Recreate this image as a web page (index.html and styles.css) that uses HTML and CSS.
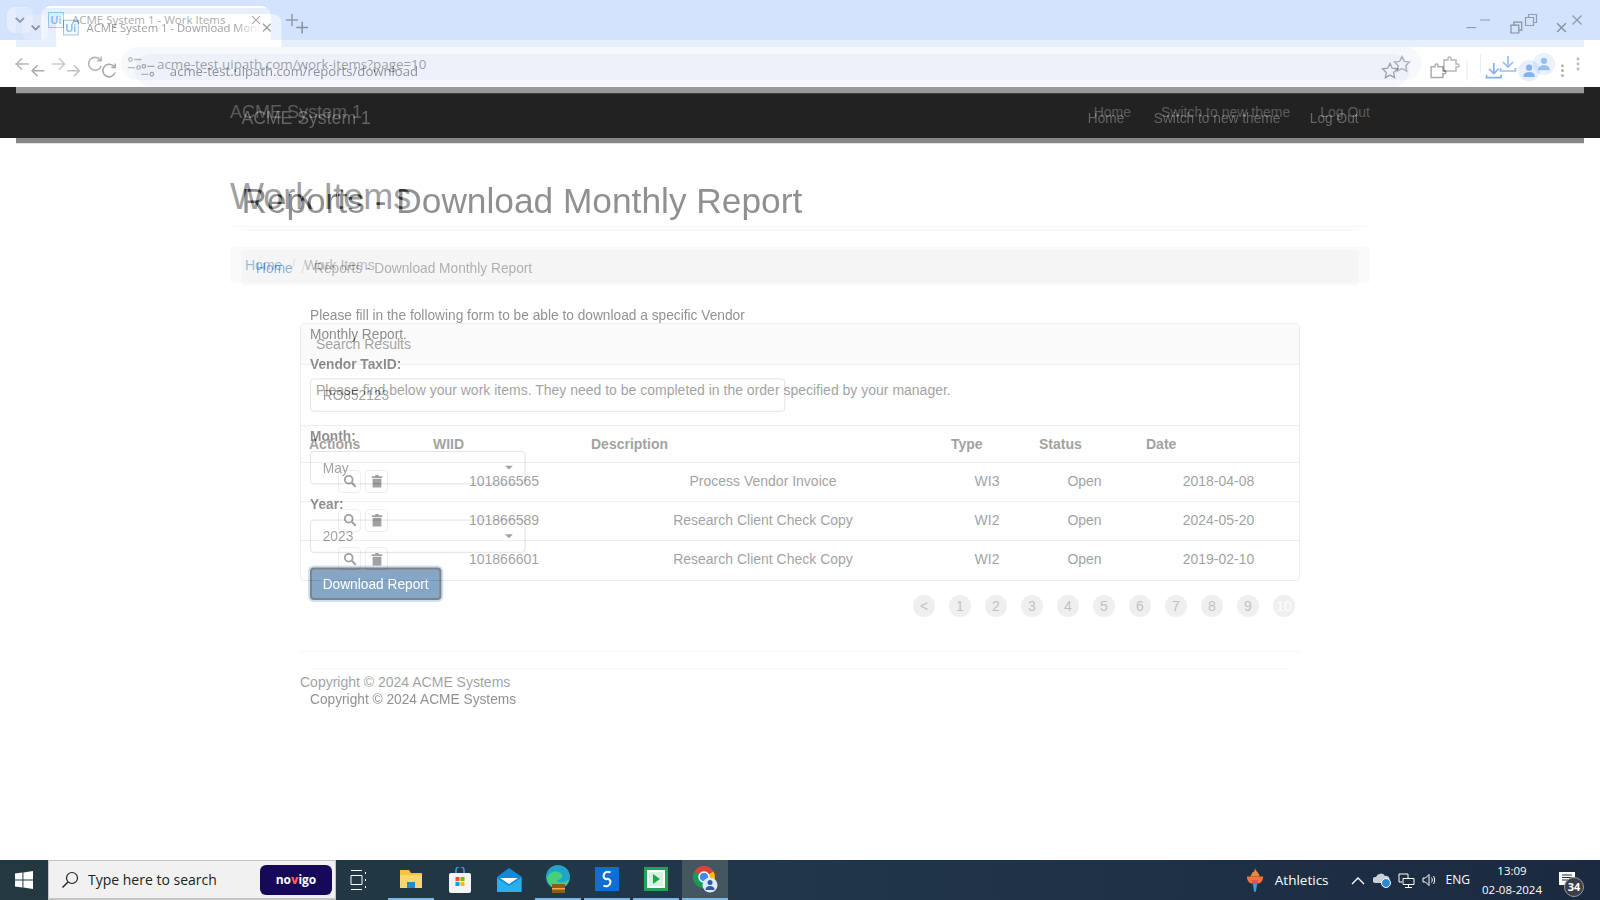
FILE: index.html
```html
<!DOCTYPE html>
<html lang="en">
<head>
	<meta charset="UTF-8">
	<title>ACME System 1</title>
	<link rel="stylesheet" href="styles.css">
</head>
<body>
	<svg class="sprite" xmlns="http://www.w3.org/2000/svg">
		<symbol id="i-chev" viewBox="0 0 16 16"><path d="M4 6l4 4 4-4" fill="none" stroke="currentColor" stroke-width="1.8"/></symbol>
		<symbol id="i-x" viewBox="0 0 16 16"><path d="M3.5 3.5l9 9m0-9l-9 9" fill="none" stroke="currentColor" stroke-width="1.4"/></symbol>
		<symbol id="i-plus" viewBox="0 0 16 16"><path d="M8 2v12M2 8h12" fill="none" stroke="currentColor" stroke-width="1.5"/></symbol>
		<symbol id="i-back" viewBox="0 0 16 16"><path d="M14 8H3m5-5L3 8l5 5" fill="none" stroke="currentColor" stroke-width="1.4"/></symbol>
		<symbol id="i-fwd" viewBox="0 0 16 16"><path d="M2 8h11M8 3l5 5-5 5" fill="none" stroke="currentColor" stroke-width="1.4"/></symbol>
		<symbol id="i-reload" viewBox="0 0 16 16"><path d="M13.5 9.5A5.7 5.7 0 1 1 12.6 4.400M13.500 1.500v3.500H10" fill="none" stroke="currentColor" stroke-width="1.4"/></symbol>
		<symbol id="i-tune" viewBox="0 0 20 20" fill="none" stroke="currentColor" stroke-width="1.400"><circle cx="5" cy="5" r="2"/><path d="M9 5h8M2 14h8"/><circle cx="14" cy="14" r="2"/></symbol>
		<symbol id="i-star" viewBox="0 0 20 20"><path d="M10 2.500l2.300 4.900 5.300.7-3.900 3.700 1 5.300-4.700-2.600-4.700 2.600 1-5.300-3.900-3.700 5.300-.7z" fill="none" stroke="currentColor" stroke-width="1.400"/></symbol>
		<symbol id="i-ext" viewBox="0 0 20 20"><path d="M3 6h4V4.500a1.500 1.500 0 0 1 3 0V6h5v4h1.500a1.500 1.500 0 0 1 0 3H15v4H3z" fill="none" stroke="currentColor" stroke-width="1.500"/></symbol>
		<symbol id="i-down" viewBox="0 0 20 20"><path d="M10 2v11m-5-5l5 5 5-5M2.500 14v3h15v-3" fill="none" stroke="currentColor" stroke-width="1.700"/></symbol>
		<symbol id="i-person" viewBox="0 0 20 20"><circle cx="10" cy="6.500" r="3.500" fill="currentColor"/><path d="M3.500 17c0-4 3-5.500 6.500-5.500s6.500 1.500 6.500 5.500z" fill="currentColor"/></symbol>
		<symbol id="i-dots" viewBox="0 0 16 16"><circle cx="8" cy="3" r="1.400" fill="currentColor"/><circle cx="8" cy="8" r="1.400" fill="currentColor"/><circle cx="8" cy="13" r="1.400" fill="currentColor"/></symbol>
		<symbol id="i-min" viewBox="0 0 16 16"><path d="M3 8h10" stroke="currentColor" stroke-width="1"/></symbol>
		<symbol id="i-restore" viewBox="0 0 16 16"><path d="M2.500 5.500h8v8h-8zM5.500 5.500v-3h8v8h-3" fill="none" stroke="currentColor" stroke-width="1.200"/></symbol>
		<symbol id="i-search" viewBox="0 0 16 16"><circle cx="6.500" cy="6.500" r="4.500" fill="none" stroke="currentColor" stroke-width="2"/><path d="M10 10l4.500 4.500" stroke="currentColor" stroke-width="2.400"/></symbol>
		<symbol id="i-trash" viewBox="0 0 16 16"><path d="M2 2.500h4V1h4v1.500h4v2H2zM3 5.500h10V15.500H3z" fill="currentColor"/></symbol>
	</svg>

	<div class="desktop">
		<!-- window behind -->
		<section class="window window-back">
			<header class="tabstrip">
				<span class="tab-search"><svg class="ico ico-16"><use href="#i-chev"/></svg></span>
				<div class="tab">
					<span class="favicon">Ui</span>
					<span class="tab-title">ACME System 1 - Work Items</span>
					<svg class="ico ico-14 tab-close"><use href="#i-x"/></svg>
				</div>
				<svg class="ico ico-16 tab-new"><use href="#i-plus"/></svg>
				<div class="win-btns">
					<svg class="ico ico-16"><use href="#i-min"/></svg>
					<svg class="ico ico-16"><use href="#i-restore"/></svg>
					<svg class="ico ico-16"><use href="#i-x"/></svg>
				</div>
			</header>
			<div class="toolbar">
				<svg class="ico ico-18"><use href="#i-back"/></svg>
				<svg class="ico ico-18 fwd"><use href="#i-fwd"/></svg>
				<svg class="ico ico-18 reload"><use href="#i-reload"/></svg>
				<div class="omnibox">
					<svg class="ico ico-18"><use href="#i-tune"/></svg>
					<span class="url">acme-test.uipath.com/work-items?page=10</span>
					<svg class="ico ico-20 star"><use href="#i-star"/></svg>
				</div>
				<svg class="ico ico-20 ext"><use href="#i-ext"/></svg>
				<span class="divider"></span>
				<svg class="ico ico-20 blue"><use href="#i-down"/></svg>
				<span class="avatar"><svg class="ico ico-18"><use href="#i-person"/></svg></span>
				<svg class="ico ico-16 menu"><use href="#i-dots"/></svg>
			</div>
			<nav class="navbar">
				<div class="container navbar-in">
					<a class="brand">ACME System 1</a>
					<ul class="nav-links">
						<li>Home</li>
						<li>Switch to new theme</li>
						<li>Log Out</li>
					</ul>
				</div>
			</nav>
			<main class="container">
				<h1 class="page-title">Work Items</h1>
				<ol class="breadcrumb">
					<li><a>Home</a></li>
					<li class="active">Work Items</li>
				</ol>
				<div class="content work-items">
					<div class="panel">
						<div class="panel-heading">Search Results</div>
						<p class="panel-body">Please find below your work items. They need to be completed in the order specified by your manager.</p>
						<table class="grid">
							<colgroup>
								<col class="c-actions"><col class="c-wiid"><col class="c-desc"><col class="c-type"><col class="c-status"><col class="c-date">
							</colgroup>
							<thead>
								<tr><th>Actions</th><th>WIID</th><th>Description</th><th>Type</th><th>Status</th><th>Date</th></tr>
							</thead>
							<tbody>
								<tr>
									<td><span class="act"><svg class="ico ico-14"><use href="#i-search"/></svg></span><span class="act"><svg class="ico ico-14"><use href="#i-trash"/></svg></span></td>
									<td>101866565</td><td>Process Vendor Invoice</td><td>WI3</td><td>Open</td><td>2018-04-08</td>
								</tr>
								<tr>
									<td><span class="act"><svg class="ico ico-14"><use href="#i-search"/></svg></span><span class="act"><svg class="ico ico-14"><use href="#i-trash"/></svg></span></td>
									<td>101866589</td><td>Research Client Check Copy</td><td>WI2</td><td>Open</td><td>2024-05-20</td>
								</tr>
								<tr>
									<td><span class="act"><svg class="ico ico-14"><use href="#i-search"/></svg></span><span class="act"><svg class="ico ico-14"><use href="#i-trash"/></svg></span></td>
									<td>101866601</td><td>Research Client Check Copy</td><td>WI2</td><td>Open</td><td>2019-02-10</td>
								</tr>
							</tbody>
						</table>
					</div>
					<ul class="pager">
						<li>&lt;</li><li>1</li><li>2</li><li>3</li><li>4</li><li>5</li><li>6</li><li>7</li><li>8</li><li>9</li><li class="current">10</li>
					</ul>
					<footer class="copy">Copyright © 2024 ACME Systems</footer>
				</div>
			</main>
		</section>

		<!-- window on top, see-through -->
		<section class="window window-front">
			<header class="tabstrip">
				<span class="tab-search"><svg class="ico ico-16"><use href="#i-chev"/></svg></span>
				<div class="tab">
					<span class="favicon">Ui</span>
					<span class="tab-title cut">ACME System 1 - Download Monthly Report</span>
					<svg class="ico ico-14 tab-close"><use href="#i-x"/></svg>
				</div>
				<svg class="ico ico-16 tab-new"><use href="#i-plus"/></svg>
				<div class="win-btns">
					<svg class="ico ico-16"><use href="#i-min"/></svg>
					<svg class="ico ico-16"><use href="#i-restore"/></svg>
					<svg class="ico ico-16"><use href="#i-x"/></svg>
				</div>
			</header>
			<div class="toolbar">
				<svg class="ico ico-18"><use href="#i-back"/></svg>
				<svg class="ico ico-18 fwd"><use href="#i-fwd"/></svg>
				<svg class="ico ico-18 reload"><use href="#i-reload"/></svg>
				<div class="omnibox">
					<svg class="ico ico-18"><use href="#i-tune"/></svg>
					<span class="url">acme-test.uipath.com/reports/download</span>
					<svg class="ico ico-20 star"><use href="#i-star"/></svg>
				</div>
				<svg class="ico ico-20 ext"><use href="#i-ext"/></svg>
				<span class="divider"></span>
				<svg class="ico ico-20 blue"><use href="#i-down"/></svg>
				<span class="avatar"><svg class="ico ico-18"><use href="#i-person"/></svg></span>
				<svg class="ico ico-16 menu"><use href="#i-dots"/></svg>
			</div>
			<nav class="navbar">
				<div class="container navbar-in">
					<a class="brand">ACME System 1</a>
					<ul class="nav-links">
						<li>Home</li>
						<li>Switch to new theme</li>
						<li>Log Out</li>
					</ul>
				</div>
			</nav>
			<main class="container">
				<h1 class="page-title">Reports - Download Monthly Report</h1>
				<ol class="breadcrumb">
					<li><a>Home</a></li>
					<li class="active">Reports - Download Monthly Report</li>
				</ol>
				<div class="content report">
					<form class="report-form">
						<p class="intro">Please fill in the following form to be able to download a specific Vendor Monthly Report.</p>
						<div class="field">
							<label for="taxid">Vendor TaxID:</label>
							<input id="taxid" class="inputBox" type="text" value="RO852123">
						</div>
						<div class="field field-month">
							<label for="month">Month:</label>
							<div class="select-wrap">
								<select id="month" class="inputBox"><option>May</option></select>
							</div>
						</div>
						<div class="field field-year">
							<label for="year">Year:</label>
							<div class="select-wrap">
								<select id="year" class="inputBox"><option>2023</option></select>
							</div>
						</div>
						<button type="button" class="btn-primary">Download Report</button>
					</form>
					<footer class="copy">Copyright © 2024 ACME Systems</footer>
				</div>
			</main>
		</section>
	</div>

	<footer class="taskbar">
		<span class="start">
			<svg width="18" height="18" viewBox="0 0 18 18"><path d="M0 2.600L7.400 1.600V8.500H0zM8.400 1.400L18 0V8.500H8.400zM0 9.500H7.400V16.400L0 15.400zM8.400 9.500H18V18L8.400 16.600z" fill="#fff"/></svg>
		</span>
		<div class="search-box">
			<svg class="search-ico" width="18" height="18" viewBox="0 0 18 18"><circle cx="11" cy="7" r="5.500" fill="none" stroke="#222" stroke-width="1.200"/><path d="M7 11l-5.500 5.500" stroke="#222" stroke-width="1.400"/></svg>
			<span class="search-text">Type here to search</span>
			<span class="novigo">no<b>v</b>igo</span>
		</div>
		<div class="task-apps">
			<span class="app">
				<svg width="18" height="20" viewBox="0 0 18 20" fill="none" stroke="#fff"><path d="M1 .5h11M1 19.500h11M1 5.500h11v9H1zM15.500 2v2M15.500 9v2M15.500 16v2"/></svg>
			</span>
			<span class="app on">
				<svg width="24" height="24" viewBox="0 0 24 24"><path d="M1 3h9l2 3h11v15H1z" fill="#f5c242"/><path d="M1 8h22v13H1z" fill="#fbd76b"/><path d="M8 21v-6h8v6z" fill="#1f8ad2"/></svg>
			</span>
			<span class="app">
				<svg width="24" height="26" viewBox="0 0 24 26"><path d="M8 7V3.500a4 4 0 0 1 8 0V7" fill="none" stroke="#2aa7e0" stroke-width="1.600"/><rect x="1" y="6" width="22" height="20" rx="2" fill="#f4f4f4"/><path d="M7.500 10h4v4h-4z" fill="#f25022"/><path d="M12.500 10h4v4h-4z" fill="#7fba00"/><path d="M7.500 15h4v4h-4z" fill="#00a4ef"/><path d="M12.500 15h4v4h-4z" fill="#ffb900"/></svg>
			</span>
			<span class="app">
				<svg width="26" height="24" viewBox="0 0 26 24"><path d="M13 0L26 9v15H1V9z" fill="#1488d8"/><path d="M1 10l12 8 12-8v14H1z" fill="#29b0ec"/><path d="M4 10h18l-9 6z" fill="#fff"/></svg>
			</span>
			<span class="app on">
				<svg width="26" height="30" viewBox="0 0 26 30"><circle cx="13" cy="13" r="12" fill="#1fa5c9"/><path d="M2 15c1-8 12-10 15-4 1 3-2 5-5 5 2 4 9 3 12-1-1 6-6 10-11 10S3 21 2 15z" fill="#46d07c"/><path d="M7 20h13v9H7z" fill="#8f5a1e"/><path d="M7 24h13v1.500H7z" fill="#f0b040"/></svg>
			</span>
			<span class="app on">
				<svg width="24" height="24" viewBox="0 0 24 24"><rect width="24" height="24" fill="#0f6fd0"/><path d="M15.500 5.500a4.500 4.500 0 0 0-7 3.500c0 2 2 3 3.500 3.500M8.500 18.500a4.500 4.500 0 0 0 7-3.500c0-2-2-3-3.500-3.500" fill="none" stroke="#fff" stroke-width="2"/></svg>
			</span>
			<span class="app on">
				<svg width="24" height="24" viewBox="0 0 24 24"><rect width="24" height="24" fill="#23a455"/><rect x="3" y="3" width="18" height="18" fill="#fff"/><rect x="5" y="5" width="14" height="14" fill="#d8f2e0"/><path d="M9 7l7 5-7 5z" fill="#23a455"/></svg>
			</span>
			<span class="app on active">
				<svg width="26" height="28" viewBox="0 0 26 28"><circle cx="12" cy="12" r="11" fill="#db4437"/><path d="M12 12L21.500 6.500A11 11 0 0 1 12 23z" fill="#fbbc05"/><path d="M12 12L12 23A11 11 0 0 1 2.500 6.500z" fill="#0f9d58"/><circle cx="12" cy="12" r="5" fill="#4285f4" stroke="#fff" stroke-width="1.500"/><circle cx="18" cy="20" r="7.500" fill="#dfe9f7"/><circle cx="18" cy="17.500" r="2.500" fill="#2a5ca8"/><path d="M13.500 25c0-3 2-4 4.500-4s4.500 1 4.500 4z" fill="#2a5ca8"/></svg>
			</span>
		</div>
		<div class="tray">
			<span class="weather">
				<svg width="18" height="26" viewBox="0 0 20 26"><path d="M10 0c1 4 5 5 5 9H5c0-2 2-2 2-5 1 1 2 1 3-4z" fill="#f0883a"/><path d="M1 9h18c0 5-3 8-6 8H7c-3 0-6-3-6-8z" fill="#f2763c"/><path d="M6 13h8c-1 3-2 4-4 4s-3-1-4-4z" fill="#e8505b"/><path d="M7.500 17h5L11 26H9z" fill="#3b9be0"/></svg>
				<span>Athletics</span>
			</span>
			<svg class="tray-chev" width="14" height="9" viewBox="0 0 14 9"><path d="M1 8l6-6 6 6" fill="none" stroke="#fff" stroke-width="1.300"/></svg>
			<svg width="18" height="16" viewBox="0 0 18 16"><path d="M2 11a3 3 0 0 1 1-6 5 5 0 0 1 9-1 3.500 3.500 0 0 1 2 7z" fill="#c9d0d6"/><circle cx="13" cy="11" r="4.500" fill="#2b88d8" stroke="#fff"/></svg>
			<svg width="17" height="15" viewBox="0 0 17 15" fill="none" stroke="#fff"><path d="M1 1h9v4M1 1v8h3M5 5.500h11v6H5zM10.500 11.500v3M7 14.500h7"/></svg>
			<svg width="16" height="14" viewBox="0 0 16 14" fill="none" stroke="#fff"><path d="M1 5h2.500L7 1.500v11L3.500 9H1zM9.500 4.500c1 1.500 1 3.500 0 5M11.500 3c1.500 2.500 1.500 5.500 0 8" /></svg>
			<span class="lang">ENG</span>
			<span class="clock"><span>13:09</span><span>02-08-2024</span></span>
			<span class="notify">
				<svg class="notify-ico" width="16" height="13" viewBox="0 0 16 13"><path d="M0 0h16v13H0z" fill="#fff"/><path d="M3 3h10M3 5.500h10M3 8h7" stroke="#1b2a40"/></svg>
				<span class="badge">34</span>
			</span>
		</div>
	</footer>
</body>
</html>
```

FILE: styles.css
```css
* {
	box-sizing: border-box;
}
html,
body {
	height: 100%;
}
body {
	margin: 0;
	display: flex;
	flex-direction: column;
	overflow: hidden;
	background: #fff;
	color: #333;
	font: 14px/20px "Liberation Sans", Arial, sans-serif;
}
ul,
ol {
	list-style: none;
	margin: 0;
	padding: 0;
}
.sprite {
	display: none;
}
.ico {
	display: block;
	flex: none;
}
.ico-14 { width: 14px; height: 14px; }
.ico-16 { width: 16px; height: 16px; }
.ico-18 { width: 18px; height: 18px; }
.ico-20 { width: 20px; height: 20px; }

/* the two windows lie one over the other */
.desktop {
	position: relative;
	flex: 1;
	overflow: hidden;
	background: #fff;
}
.window {
	position: absolute;
	left: 0;
	top: 0;
	width: 1600px;
	height: 880px;
	background: #fff;
}
.window-front {
	left: 16px;
	top: 8px;
	opacity: .54;
	transform: scale(.98);
	transform-origin: 0 0;
}

/* browser chrome */
.tabstrip {
	display: flex;
	align-items: flex-start;
	height: 40px;
	padding-top: 6px;
	background: #d3e3fd;
	color: #45494f;
}
.tab-search {
	display: flex;
	align-items: center;
	justify-content: center;
	width: 26px;
	height: 26px;
	margin: 1px 8px 0 7px;
	border-radius: 8px;
	background: #e6eefd;
}
.tab {
	display: flex;
	align-items: center;
	width: 230px;
	height: 34px;
	padding: 0 8px 7px 7px;
	border-radius: 10px 10px 0 0;
	background: #fff;
	color: #45494f;
}
.favicon {
	flex: none;
	width: 16px;
	height: 16px;
	border: 1px solid #3f9fe0;
	background: #eaf5fc;
	color: #2a8fd6;
	font: bold 11px/14px "Liberation Sans", sans-serif;
	text-align: center;
}
.tab-title {
	flex: 1;
	margin-left: 8px;
	overflow: hidden;
	white-space: nowrap;
	font: 11.500px/16px "Open Sans", sans-serif;
}
.tab-title.cut {
	-webkit-mask-image: linear-gradient(to right, #000 85%, transparent);
	mask-image: linear-gradient(to right, #000 85%, transparent);
}
.tab-new {
	margin: 6px 0 0 13px;
}
.win-btns {
	display: flex;
	gap: 30px;
	margin: 6px 15px 0 auto;
}
.toolbar {
	display: flex;
	align-items: center;
	height: 47px;
	padding: 0 14px 0 13px;
	background: #fff;
	color: #5f6368;
}
.fwd {
	margin-left: 19px;
	opacity: .7;
}
.reload {
	margin-left: 18px;
}
.omnibox {
	display: flex;
	flex: 1;
	align-items: center;
	height: 33px;
	margin: 0 10px 0 17px;
	padding: 0 10px 0 5px;
	border-radius: 17px;
	background: #edf2fa;
}
.url {
	flex: 1;
	margin-left: 13px;
	color: #3c4043;
	font: 13.400px/20px "Open Sans", sans-serif;
}
.ext {
	margin-left: 9px;
}
.divider {
	width: 1px;
	height: 20px;
	margin: 0 17px 0 19px;
	background: #c6d8f5;
}
.blue {
	color: #1a73e8;
}
.avatar {
	display: flex;
	align-items: center;
	justify-content: center;
	width: 20px;
	height: 20px;
	margin-left: 16px;
	border-radius: 50%;
	background: #d3e3fd;
	color: #1a73e8;
	box-shadow: 0 0 0 1px #d3e3fd;
}
.menu {
	margin-left: 16px;
}

/* page */
.navbar {
	height: 51px;
	background: #222;
	color: #9d9d9d;
}
.container {
	width: 1140px;
	margin: 0 auto;
}
.navbar-in {
	display: flex;
	align-items: center;
	justify-content: space-between;
	height: 50px;
}
.brand {
	font-size: 18px;
}
.nav-links {
	display: flex;
	gap: 30px;
}
.page-title {
	margin: 39px 0 20px;
	padding-bottom: 9px;
	border-bottom: 1px solid #eee;
	font-size: 36px;
	font-weight: 400;
	line-height: 40px;
}
.breadcrumb {
	display: flex;
	height: 36px;
	padding: 8px 15px;
	border-radius: 4px;
	background: #f5f5f5;
}
.breadcrumb li + li {
	margin-left: 4px;
}
.breadcrumb li + li::before {
	content: "/\00a0";
	padding: 0 5px;
	color: #ccc;
}
.breadcrumb a {
	color: #337ab7;
}
.breadcrumb .active {
	color: #777;
}
.content {
	margin-left: 70px;
	width: 1000px;
}
.panel {
	margin-top: 40px;
	border: 1px solid #ddd;
	border-radius: 4px;
}
.panel-heading {
	height: 41px;
	padding: 10px 15px;
	border-bottom: 1px solid #ddd;
	background: #f5f5f5;
}
.panel-body {
	margin: 0;
	padding: 15px 15px 25px;
}
.grid {
	width: 998px;
	border-collapse: collapse;
	table-layout: fixed;
}
.c-actions { width: 124px; }
.c-wiid { width: 158px; }
.c-desc { width: 360px; }
.c-type { width: 88px; }
.c-status { width: 107px; }
.c-date { width: 161px; }
.grid th {
	height: 37px;
	padding: 8px;
	border-top: 1px solid #ddd;
	border-bottom: 1px solid #ddd;
	text-align: left;
}
.grid td {
	height: 39px;
	padding: 6px 8px 8px;
	border-bottom: 1px solid #ddd;
	text-align: center;
	vertical-align: middle;
}
.grid tr:last-child td {
	padding-bottom: 10px;
	border-bottom: none;
}
.act {
	display: inline-flex;
	align-items: center;
	justify-content: center;
	width: 23px;
	height: 23px;
	margin: 0 2px;
	border: 1px solid #ddd;
	border-radius: 4px;
	color: #333;
	vertical-align: middle;
}
.pager {
	display: flex;
	justify-content: flex-end;
	gap: 14px;
	margin: 14px 5px 34px 0;
}
.pager li {
	width: 22px;
	height: 22px;
	border-radius: 50%;
	background: #ddd;
	color: #777;
	line-height: 22px;
	text-align: center;
}
.pager .current {
	color: #fff;
}
.copy {
	padding-top: 20px;
	border-top: 1px solid #eee;
}

/* report form */
.report-form {
	width: 485px;
	margin: 20px 0 70px;
}
.intro {
	margin: 0 0 10px;
}
.field {
	margin-bottom: 15px;
}
.field-month {
	margin-bottom: 10px;
}
.field label {
	display: block;
	margin-bottom: 5px;
	font-weight: 700;
}
.field-year label {
	margin-bottom: 6px;
}
.inputBox {
	display: block;
	width: 100%;
	height: 34px;
	padding: 6px 12px;
	border: 1px solid #ccc;
	border-radius: 4px;
	background: #fff;
	color: #555;
	font: 14px/20px "Liberation Sans", Arial, sans-serif;
	outline: none;
	appearance: none;
}
.select-wrap {
	position: relative;
	width: 220px;
}
.select-wrap::after {
	content: "";
	position: absolute;
	right: 13px;
	top: 15px;
	border-top: 4px solid #555;
	border-left: 4px solid transparent;
	border-right: 4px solid transparent;
}
.btn-primary {
	display: block;
	width: 134px;
	height: 33px;
	padding: 0;
	border: 2px solid #1a1a1a;
	border-radius: 4px;
	background: #1f5c94;
	box-shadow: 0 0 0 2px #9ecaed;
	color: #fff;
	font: 14px/20px "Liberation Sans", Arial, sans-serif;
}

/* taskbar */
.taskbar {
	display: flex;
	flex: none;
	height: 40px;
	background: linear-gradient(to right, #23393f 0, #21364a 50%, #1b2a40 100%);
	color: #fff;
}
.start {
	display: flex;
	align-items: center;
	justify-content: center;
	width: 48px;
}
.search-box {
	display: flex;
	align-items: center;
	width: 288px;
	padding: 0 3px 0 12px;
	border: 1px solid #c4c4c4;
	border-bottom-width: 2px;
	background: #f1f1f1;
	color: #222;
}
.search-text {
	flex: 1;
	margin-left: 9px;
	font: 14px/20px "Open Sans", sans-serif;
}
.novigo {
	display: block;
	width: 72px;
	height: 30px;
	border-radius: 6px;
	background: #16095a;
	color: #fff;
	font: 700 12px/30px "Open Sans", sans-serif;
	text-align: center;
}
.novigo b {
	color: #ff5a5a;
}
.task-apps {
	display: flex;
	gap: 3px;
}
.app {
	display: flex;
	align-items: center;
	justify-content: center;
	width: 46px;
	height: 40px;
}
.app:first-child {
	margin-right: 3px;
}
.app.on {
	border-bottom: 2px solid #76b9ed;
}
.app.active {
	background: #44565f;
}
.tray {
	display: flex;
	align-items: center;
	gap: 7px;
	margin-left: auto;
	padding-right: 15px;
}
.weather {
	display: flex;
	align-items: center;
	gap: 11px;
	margin-right: 15px;
	font: 13.500px/20px "Open Sans", sans-serif;
}
.tray-chev {
	margin-right: 1px;
}
.lang {
	margin-left: 1px;
	font: 12px/16px "Open Sans", sans-serif;
}
.clock {
	display: flex;
	flex-direction: column;
	align-items: center;
	margin: 0 10px 0 5px;
	font: 11.500px/19px "Open Sans", sans-serif;
}
.notify {
	position: relative;
	display: block;
	width: 26px;
	height: 22px;
}
.notify-ico {
	display: block;
	margin-top: 3px;
}
.badge {
	position: absolute;
	left: 5px;
	top: 8px;
	width: 20px;
	height: 20px;
	border: 1px solid #999;
	border-radius: 50%;
	background: #3a3f47;
	font: 700 11px/18px "Open Sans", sans-serif;
	text-align: center;
}
```
